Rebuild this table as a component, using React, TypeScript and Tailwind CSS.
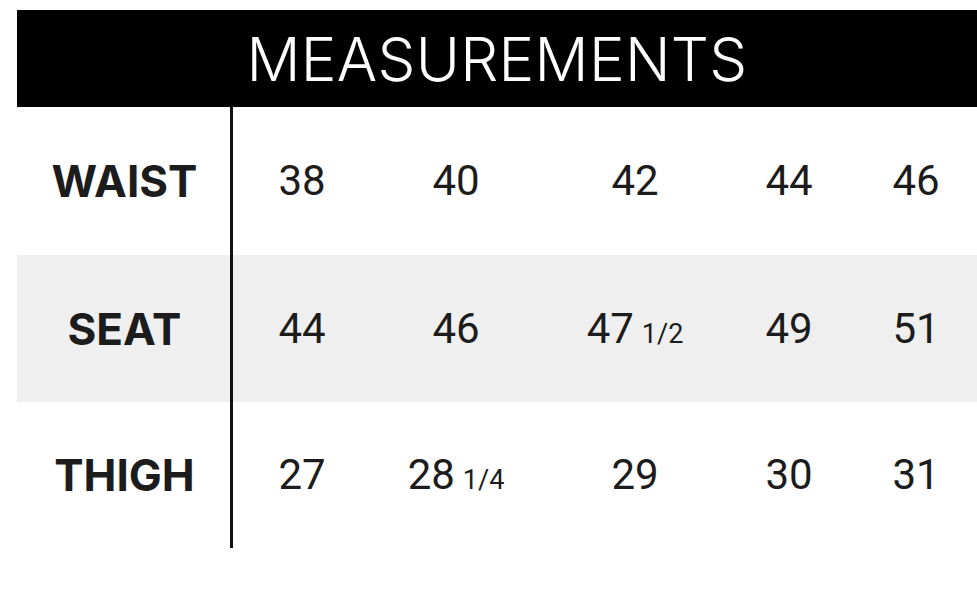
const rows = [
  { label: "WAIST", values: ["38", "40", "42", "44", "46"], shaded: false, h: "h-[148px]" },
  { label: "SEAT", values: ["44", "46", "47 1/2", "49", "51"], shaded: true, h: "h-[147px]" },
  { label: "THIGH", values: ["27", "28 1/4", "29", "30", "31"], shaded: false, h: "h-[146px]" },
];

const colWidths = ["w-[138px]", "w-[170px]", "w-[188px]", "w-[120px]", "w-[134px]"];

function Value({ text }: { text: string }) {
  const [whole, frac] = text.split(" ");
  return (
    <span
      className="text-[42px] leading-none text-[#1c1c1c]"
      style={{ fontFamily: "Roboto, 'Liberation Sans', sans-serif" }}
    >
      {whole}
      {frac && <span className="ml-[8px] text-[27px]">{frac}</span>}
    </span>
  );
}

export default function App() {
  return (
    <div
      className="h-[607px] w-[977px] overflow-hidden bg-white pt-[10px] pl-[17px]"
      style={{ fontFamily: "Inter, 'Noto Sans', sans-serif" }}
    >
      <div className="flex h-[97px] items-center justify-center bg-black">
        <h1 className="text-[60px] font-light leading-none tracking-[0.3px] text-white">MEASUREMENTS</h1>
      </div>

      <div className="flex flex-col">
        {rows.map((row) => (
          <div key={row.label} className={`flex ${row.h} ${row.shaded ? "bg-[#efefef]" : "bg-white"}`}>
            <div className="flex w-[216px] shrink-0 items-center justify-center border-r-[3px] border-[#111]">
              <span className="pl-[2px] text-[44px] font-bold leading-none text-[#1c1c1c]">{row.label}</span>
            </div>
            {row.values.map((v, i) => (
              <div key={i} className={`flex ${colWidths[i]} shrink-0 items-center justify-center`}>
                <Value text={v} />
              </div>
            ))}
          </div>
        ))}
      </div>
    </div>
  );
}
